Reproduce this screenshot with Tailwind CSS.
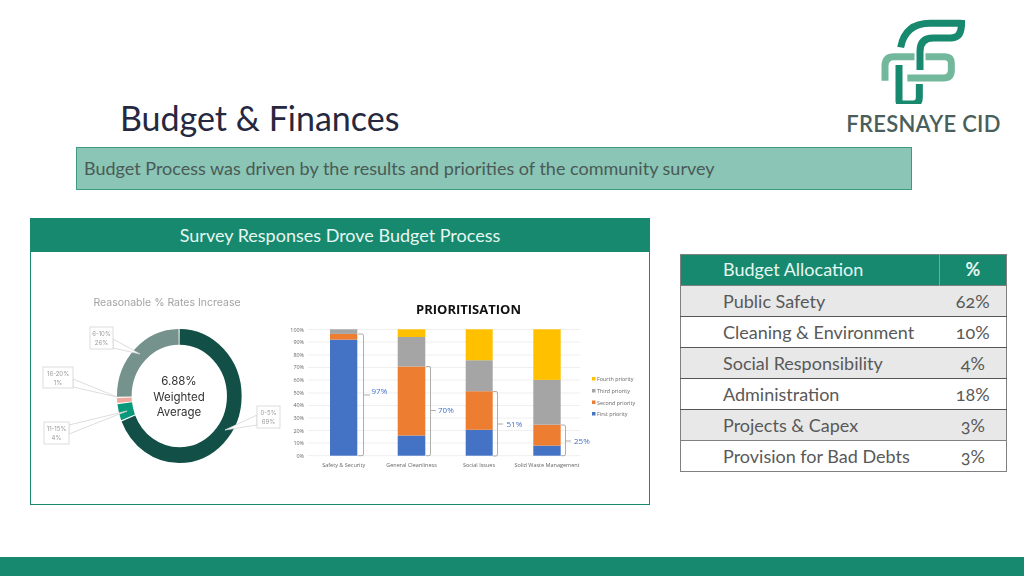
<!DOCTYPE html>
<html><head><meta charset="utf-8">
<script src="https://cdn.jsdelivr.net/npm/@tailwindcss/browser@4"></script>
</head>
<body class="m-0 bg-white">
<div class="w-[1024px] h-[576px] flex flex-col overflow-hidden bg-white font-['Lato','Open_Sans',sans-serif]">
  <div class="h-[147px] flex justify-between shrink-0">
    <h1 class="mt-auto mb-[7px] ml-[120px] text-[34px] leading-[44px] font-normal text-[#25283f]">Budget &amp; Finances</h1>
    <div class="w-[190px] mr-[4px] mt-[10px] flex flex-col items-center">
      <svg width="190" height="94" viewBox="0 0 570 282" fill="none" stroke-width="21">
        <path d="M165 212V168Q165 140 192 140H345Q364 140 364 160V180Q364 204 340 204H232" stroke="#72b89c"/>
        <path d="M270 124V180" stroke="#fff" stroke-width="33"/>
        <path d="M212 112Q226 40 300 40H392Q396 40 394 50Q392 84 362 84H310Q270 84 270 124V180" stroke="#17896f"/>
        <path d="M405 30V46L395 30Z" fill="#17896f" stroke="none"/>
        <path d="M207 165V272Q207 282 217 282H250Q268 282 268 262V222" stroke="#17896f"/>
      </svg>
      <span class="mt-[7px] mr-[3px] tracking-[0.25px] font-['Lato',sans-serif] font-semibold text-[22px] leading-[26px] text-[#4a5f5b] whitespace-nowrap">FRESNAYE CID</span>
    </div>
  </div>

  <div class="ml-[76px] w-[836px] h-[43px] shrink-0 flex items-center pl-[7px] bg-[#8ac5b6] border border-[#3f9a82] text-[18px] text-[#4a5a55]">Budget Process was driven by the results and priorities of the community survey</div>

  <div class="flex mt-[28px] items-start">
    <section class="ml-[30px] w-[620px] h-[287px] border border-[#17896f] flex flex-col">
      <div class="h-[33px] bg-[#17896f] text-[#e6f7f2] text-[18px] flex items-center justify-center shrink-0">Survey Responses Drove Budget Process</div>
      <svg class="blur-[0.35px]" width="618" height="252" viewBox="31 252 618 252" font-family="Inter, sans-serif">
        <text x="167" y="306" font-size="10.5" fill="#a3a3a3" text-anchor="middle">Reasonable % Rates Increase</text>
        <g transform="translate(179.3 396) scale(1 1.075)" fill="none" stroke-width="14.7">
          <g transform="rotate(-90)">
            <circle r="55" pathLength="100" stroke="#124f47" stroke-dasharray="68.7 31.3" stroke-dashoffset="-0.1"/>
            <circle r="55" pathLength="100" stroke="#08997a" stroke-dasharray="3.9 96.1" stroke-dashoffset="-69.1"/>
            <circle r="55" pathLength="100" stroke="#eea99c" stroke-dasharray="1.2 98.8" stroke-dashoffset="-73.3"/>
            <circle r="55" pathLength="100" stroke="#75928c" stroke-dasharray="25 75" stroke-dashoffset="-74.8"/>
          </g>
        </g>
        <g fill="#333" font-size="11.5" text-anchor="middle">
          <text x="179" y="385">6.88%</text>
          <text x="179" y="401">Weighted</text>
          <text x="179" y="416">Average</text>
        </g>
        <g fill="#fff" stroke="#d4d4d4" stroke-width=".8">
          <polygon points="113,339 140,354 113,348"/>
          <polygon points="73,379 117,397 73,387"/>
          <polygon points="69,425 127,411 69,434"/>
          <polygon points="257,415 225,430 257,425"/>
          <rect x="90" y="327" width="23" height="22"/>
          <rect x="43" y="367" width="30" height="21"/>
          <rect x="44" y="422" width="25" height="22"/>
          <rect x="257" y="406" width="23" height="22"/>
        </g>
        <g fill="#999" font-size="6" text-anchor="middle">
          <text x="101.5" y="335.5">6-10%</text><text x="101.5" y="345">26%</text>
          <text x="58" y="375.5">16-20%</text><text x="58" y="385">1%</text>
          <text x="56.5" y="430.5">11-15%</text><text x="56.5" y="440">4%</text>
          <text x="268.5" y="414.5">0-5%</text><text x="268.5" y="424">69%</text>
        </g>

        <text x="468.5" y="314" font-family="Open Sans, sans-serif" font-weight="700" font-size="13" fill="#111" text-anchor="middle">PRIORITISATION</text>
        <g stroke="#e8e8e8" stroke-width=".7">
          <path d="M308 329.5H580M308 342H580M308 355H580M308 367.5H580M308 380H580M308 393H580M308 405.5H580M308 418H580M308 430.5H580M308 443H580M308 455.7H580"/>
        </g>
        <g font-family="Open Sans, sans-serif" font-size="5.4" fill="#666" text-anchor="end">
          <text x="304" y="331.5">100%</text><text x="304" y="344.2">90%</text><text x="304" y="356.8">80%</text><text x="304" y="369.4">70%</text><text x="304" y="382">60%</text><text x="304" y="394.7">50%</text><text x="304" y="407.3">40%</text><text x="304" y="420">30%</text><text x="304" y="432.6">20%</text><text x="304" y="445.2">10%</text><text x="304" y="457.8">0%</text>
        </g>
        <rect x="330" y="339.6" width="27.3" height="116.1" fill="#4472c4"/>
        <rect x="330" y="333.9" width="27.3" height="5.7" fill="#ed7d31"/>
        <rect x="330" y="329.3" width="27.3" height="4.6" fill="#a5a5a5"/>
        <rect x="397.7" y="435.5" width="27.6" height="20.2" fill="#4472c4"/>
        <rect x="397.7" y="366.5" width="27.6" height="69" fill="#ed7d31"/>
        <rect x="397.7" y="337" width="27.6" height="29.5" fill="#a5a5a5"/>
        <rect x="397.7" y="329.3" width="27.6" height="7.7" fill="#ffc000"/>
        <rect x="465.7" y="429.8" width="27" height="25.9" fill="#4472c4"/>
        <rect x="465.7" y="391.2" width="27" height="38.6" fill="#ed7d31"/>
        <rect x="465.7" y="360.2" width="27" height="31" fill="#a5a5a5"/>
        <rect x="465.7" y="329.3" width="27" height="30.9" fill="#ffc000"/>
        <rect x="533.3" y="445.6" width="27.4" height="10.1" fill="#4472c4"/>
        <rect x="533.3" y="424.7" width="27.4" height="20.9" fill="#ed7d31"/>
        <rect x="533.3" y="379.9" width="27.4" height="44.8" fill="#a5a5a5"/>
        <rect x="533.3" y="329.3" width="27.4" height="50.6" fill="#ffc000"/>
        <g fill="none" stroke="#9a9a9a" stroke-width=".8">
          <path d="M358 334H362Q363.5 334 363.5 336V454Q363.5 455.7 362 455.7H358"/>
          <path d="M426 366.5H429Q430.5 366.5 430.5 368V454Q430.5 455.7 429 455.7H426"/>
          <path d="M493 391.5H496Q497.5 391.5 497.5 393V454Q497.5 456 496 456H493"/>
          <path d="M561 425H564Q565.5 425 565.5 427V454Q565.5 455.7 564 455.7H561"/>
          <path d="M364 395H370M431 410.5H436M498 424H503M566 441H571"/>
        </g>
        <g font-family="Open Sans, sans-serif" font-size="8" fill="#4472c4">
          <text x="371.5" y="394">97%</text>
          <text x="438" y="413">70%</text>
          <text x="506.5" y="426.5">51%</text>
          <text x="574" y="443.5">25%</text>
        </g>
        <g font-family="Open Sans, sans-serif" font-size="5.5" fill="#666" text-anchor="middle">
          <text x="343.7" y="466.5">Safety &amp; Security</text>
          <text x="411.5" y="466.5">General Cleanliness</text>
          <text x="479" y="466.5">Social Issues</text>
          <text x="547" y="466.5">Solid Waste Management</text>
        </g>
        <rect x="592" y="377" width="3.5" height="3.5" fill="#ffc000"/>
        <rect x="592" y="389" width="3.5" height="3.5" fill="#a5a5a5"/>
        <rect x="592" y="400.5" width="3.5" height="3.5" fill="#ed7d31"/>
        <rect x="592" y="412" width="3.5" height="3.5" fill="#4472c4"/>
        <g font-family="Open Sans, sans-serif" font-size="5.4" fill="#666">
          <text x="597" y="381">Fourth priority</text>
          <text x="597" y="393">Third priority</text>
          <text x="597" y="404.5">Second priority</text>
          <text x="597" y="416">First priority</text>
        </g>
      </svg>
    </section>

    <table class="ml-[30px] mt-[36px] w-[327px] h-[218px] border-collapse table-fixed text-[18px] text-[#595959] border border-[#808080] oldstyle-nums">
      <colgroup><col class="w-[259px]"><col></colgroup>
      <thead>
        <tr class="h-[31px] bg-[#17896f] text-[#e6f7f2]">
          <th class="pl-[42px] pb-[1px] text-left font-normal border-r border-[#5fb3a0]">Budget Allocation</th>
          <th class="text-center pb-[1px] font-bold text-[#e6f7f2]">%</th>
        </tr>
      </thead>
      <tbody>
        <tr class="h-[31px] bg-[#e8e8e8] border-t border-[#7f7f7f]"><td class="pl-[42px]">Public Safety</td><td class="text-center">62%</td></tr>
        <tr class="h-[31px] bg-white border-t border-[#555]"><td class="pl-[42px]">Cleaning &amp; Environment</td><td class="text-center">10%</td></tr>
        <tr class="h-[31px] bg-[#e8e8e8] border-t border-[#555]"><td class="pl-[42px]">Social Responsibility</td><td class="text-center">4%</td></tr>
        <tr class="h-[31px] bg-white border-t border-[#555]"><td class="pl-[42px]">Administration</td><td class="text-center">18%</td></tr>
        <tr class="h-[31px] bg-[#e8e8e8] border-t border-[#555]"><td class="pl-[42px]">Projects &amp; Capex</td><td class="text-center">3%</td></tr>
        <tr class="h-[31px] bg-white border-t border-[#808080]"><td class="pl-[42px]">Provision for Bad Debts</td><td class="text-center">3%</td></tr>
      </tbody>
    </table>
  </div>

  <div class="mt-auto h-[19px] bg-[#17896f] shrink-0"></div>
</div>
</body></html>
